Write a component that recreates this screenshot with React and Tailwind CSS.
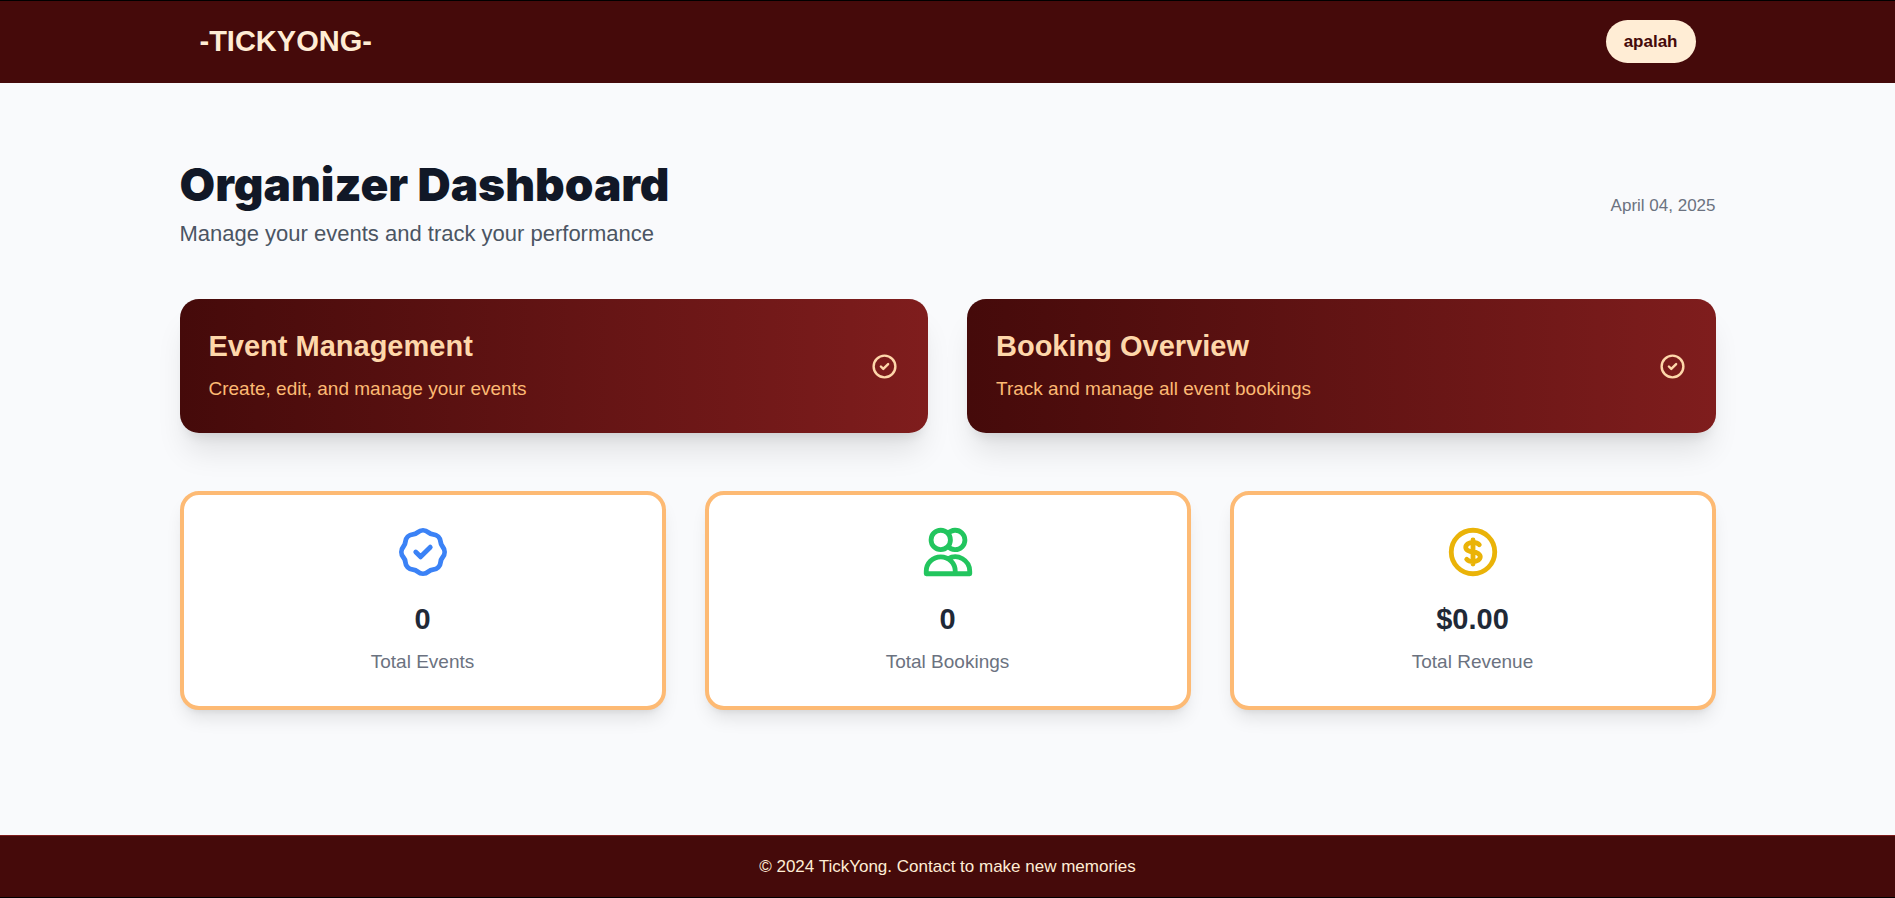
const actions = [
  {
    title: "Event Management",
    text: "Create, edit, and manage your events",
  },
  {
    title: "Booking Overview",
    text: "Track and manage all event bookings",
  },
];

const stats = [
  {
    label: "Total Events",
    value: "0",
    color: "text-[#3b82f6]",
    path: "M9 12l2 2 4-4M7.835 4.697a3.42 3.42 0 001.946-.806 3.42 3.42 0 014.438 0 3.42 3.42 0 001.946.806 3.42 3.42 0 013.138 3.138 3.42 3.42 0 00.806 1.946 3.42 3.42 0 010 4.438 3.42 3.42 0 00-.806 1.946 3.42 3.42 0 01-3.138 3.138 3.42 3.42 0 00-1.946.806 3.42 3.42 0 01-4.438 0 3.42 3.42 0 00-1.946-.806 3.42 3.42 0 01-3.138-3.138 3.42 3.42 0 00-.806-1.946 3.42 3.42 0 010-4.438 3.42 3.42 0 00.806-1.946 3.42 3.42 0 013.138-3.138z",
  },
  {
    label: "Total Bookings",
    value: "0",
    color: "text-[#22c55e]",
    path: "M12 4.354a4 4 0 110 5.292M15 21H3v-1a6 6 0 0112 0v1zm0 0h6v-1a6 6 0 00-9-5.197M13 7a4 4 0 11-8 0 4 4 0 018 0z",
  },
  {
    label: "Total Revenue",
    value: "$0.00",
    color: "text-[#eab308]",
    path: "M12 8c-1.657 0-3 .895-3 2s1.343 2 3 2 3 .895 3 2-1.343 2-3 2m0-8c1.11 0 2.08.402 2.599 1M12 8V7m0 1v8m0 0v1m0-1c-1.11 0-2.08-.402-2.599-1M21 12a9 9 0 11-18 0 9 9 0 0118 0z",
  },
];

function Icon({ path, className }) {
  return (
    <svg
      className={className}
      viewBox="0 0 24 24"
      fill="none"
      stroke="currentColor"
      strokeWidth="2"
      strokeLinecap="round"
      strokeLinejoin="round"
      aria-hidden="true"
    >
      <path d={path} />
    </svg>
  );
}

function Header() {
  return (
    <header className="bg-[#450a0a]">
      <nav className="mx-auto flex max-w-[1536px] items-center justify-between px-5 pt-[19px] pb-5">
        <a href="#" className="text-[29px] leading-[43px] font-bold text-[#ffedd5]">
          -TICKYONG-
        </a>
        <button
          type="button"
          className="rounded-full bg-[#ffedd5] px-[18px] py-[10px] text-[17px] leading-[23px] font-bold text-[#450a0a]"
        >
          apalah
        </button>
      </nav>
    </header>
  );
}

function ActionCard({ title, text }) {
  return (
    <a
      href="#"
      className="flex items-center justify-between rounded-[19px] bg-linear-to-r/srgb from-[#450a0a] to-[#7f1d1d] p-[29px] shadow-[0_24px_30px_-6px_rgba(0,0,0,0.1),0_10px_12px_-7px_rgba(0,0,0,0.1)]"
    >
      <div>
        <h2 className="mb-[10px] text-[29px] leading-9 font-bold text-[#fed7aa]">{title}</h2>
        <p className="text-[19px] leading-[30px] text-[#fdba74]">{text}</p>
      </div>
      <Icon
        className="size-[29px] shrink-0 text-[#fed7aa]"
        path="M9 12l2 2 4-4m6 2a9 9 0 11-18 0 9 9 0 0118 0z"
      />
    </a>
  );
}

function StatCard({ label, value, color, path }) {
  return (
    <div className="flex flex-col items-center rounded-[19px] border-4 border-[#fdba74] bg-white p-[28px] text-center shadow-[0_12px_18px_-4px_rgba(0,0,0,0.1),0_5px_7px_-5px_rgba(0,0,0,0.1)]">
      <div className={color}>
        <Icon className="size-[58px]" path={path} />
      </div>
      <h3 className="mt-[19px] text-[29px] leading-[38px] font-bold text-[#1f2937]">{value}</h3>
      <p className="mt-2 text-[19px] leading-8 text-[#6b7280]">{label}</p>
    </div>
  );
}

export default function App() {
  return (
    <div className="flex min-h-screen flex-col border-y border-black bg-[#f9fafc] font-['Liberation_Sans',Arial,sans-serif]">
      <Header />
      <main className="mx-auto w-full max-w-[1536px] flex-1 py-[77px]">
        <div className="mb-12 flex items-center justify-between">
          <div>
            <h1 className="font-[Inter,sans-serif] text-[46px] leading-[48px] font-black text-[#111827]">
              Organizer Dashboard
            </h1>
            <p className="mt-[9px] text-[22px] leading-[34px] text-[#4b5563]">
              Manage your events and track your performance
            </p>
          </div>
          <time dateTime="2025-04-04" className="text-[17px] leading-6 text-[#6b7280]">
            April 04, 2025
          </time>
        </div>
        <div className="mb-[58px] grid gap-[39px] md:grid-cols-2">
          {actions.map((a) => (
            <ActionCard key={a.title} {...a} />
          ))}
        </div>
        <div className="grid gap-[39px] md:grid-cols-3">
          {stats.map((s) => (
            <StatCard key={s.label} {...s} />
          ))}
        </div>
      </main>
      <footer className="border-t border-[#7f1d1d] bg-[#450a0a] py-[19px] text-center text-[17px] leading-[23px] text-[#ffedd5]">
        © 2024 TickYong. Contact to make new memories
      </footer>
    </div>
  );
}
